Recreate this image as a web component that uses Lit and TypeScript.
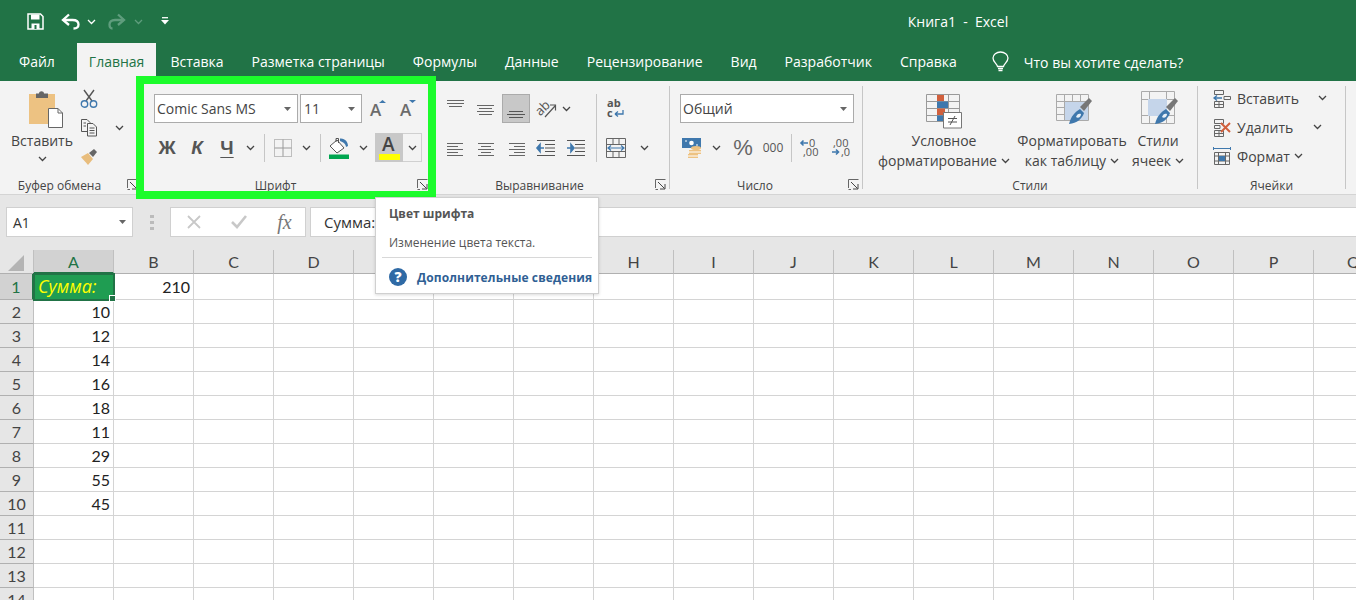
import { LitElement, html, css, svg } from 'lit';
import { customElement } from 'lit/decorators.js';

const BLUE = '#3f78ad';

const icon = (w: number, h: number, body: unknown) => html`<svg width=${w} height=${h} viewBox="0 0 ${w} ${h}" fill="none">${body}</svg>`;

const chev = (c = '#444') => icon(9, 6, svg`<path d="M1 1L4.5 4.5L8 1" stroke=${c} stroke-width="1.3"/>`);
const drop = () => icon(7, 4, svg`<path d="M0 0H7L3.5 4Z" fill="#666"/>`);
const launcher = () => html`<span class="launcher">${icon(11, 11, svg`<path d="M.5 9V.5H10.5" stroke="#666"/><path d="M3 3L9.5 9.5M5 10H10V5" stroke="#444"/><path d="M.5 10.5H3" stroke="#666"/>`)}</span>`;

const lines = (rows: [number, number, number][], color = '#666') => icon(24, 24, rows.map(([x1, x2, y]) => svg`<path d="M${x1} ${y}.5H${x2}" stroke=${color}/>`));

const alignIcons = {
  top: lines([[3, 20, 3], [3, 20, 6], [5, 18, 9]]),
  middle: lines([[3, 20, 8], [5, 18, 11], [3, 20, 14], [5, 18, 17]]),
  bottom: lines([[5, 19, 14], [3, 21, 17], [5, 19, 20]], '#555'),
  left: lines([[3, 19, 7], [3, 14, 10], [3, 19, 13], [3, 14, 16], [3, 19, 19]]),
  center: lines([[4, 20, 7], [7, 17, 10], [4, 20, 13], [7, 17, 16], [4, 20, 19]]),
  right: lines([[5, 21, 7], [10, 21, 10], [5, 21, 13], [10, 21, 16], [5, 21, 19]]),
};

// both indent icons keep the text lines on the right, only the arrow turns
const indent = (forward: boolean) => icon(20, 18, svg`
  <path d="M1 1.5H19M9 5.5H19M9 9H19M9 12.5H19M1 16.5H19" stroke="#555"/>
  <path d=${forward ? 'M1 9H6M5 5.5L8 9L5 12.5Z' : 'M8 9H3M4 5.5L1 9L4 12.5Z'} stroke=${BLUE} fill=${BLUE} stroke-width="1.6"/>`);

const slimBrush = svg`
  <path d="M24 14L33 5L36 8L28 18Z" fill="#777"/>
  <path d="M13 31C15 23 19 19 24 16L28 20C26 26 21 30 13 31Z" fill="#3f78ad"/>
  <path d="M20 24C21 21 23 20 25 21C25 24 22 26 20 24Z" fill="#e8f0f8"/>`;

const icons = {
  save: icon(17, 17, svg`<path d="M1 1H13.5L16 3.5V16H1Z" stroke="#fff" stroke-width="1.5"/><path d="M4 1.5H12.5V6.5H4Z" fill="#fff"/><path d="M4.5 16V10.5H12.5V16" fill="#fff"/><path d="M7.5 12H9.5V16H7.5Z" fill="#217346"/>`),
  undo: icon(19, 17, svg`<path d="M8 1.5L2 7L8 12" stroke="#fff" stroke-width="2.3"/><path d="M2.5 7H11.5C15.5 7 17.5 9 17.5 11.5C17.5 14 15.5 15.5 12.5 15.5" stroke="#fff" stroke-width="2.3"/>`),
  redo: icon(18, 17, svg`<path d="M10 1.5L16 7L10 12" stroke="#5f9d7d" stroke-width="2.3"/><path d="M15.5 7H7C3 7 1.5 9 1.5 11.5C1.5 14 2.5 15.5 4.5 15.5" stroke="#5f9d7d" stroke-width="2.3"/>`),
  custom: icon(8, 9, svg`<path d="M1 .7H7" stroke="#fff" stroke-width="1.3"/><path d="M0 3H8L4 7.5Z" fill="#fff"/>`),
  bulb: icon(17, 22, svg`<path d="M5.5 15.5C5 12.5 1 11 1 7C1 3.5 4.5 1 8.5 1C12.5 1 16 3.5 16 7C16 11 12 12.5 11.5 15.5Z" stroke="#fff" stroke-width="1.3"/><path d="M6 17.5H11M6.5 19.5H10.5" stroke="#fff" stroke-width="1.3"/>`),
  paste: icon(36, 38, svg`
    <path d="M1 4H27V34H1Z" fill="#edc282"/>
    <path d="M8 3.5H11C11 .5 16 .5 16 3.5H20V8H8Z" fill="#666"/>
    <path d="M20.5 18.5H30L34.5 23V37.5H20.5Z" fill="#fff" stroke="#666"/>
    <path d="M30 18.5V23H34.5" stroke="#666"/>`),
  cut: icon(18, 20, svg`<path d="M4 1L12 12M14 1L6 12" stroke="#555" stroke-width="1.4"/><circle cx="4.5" cy="15" r="3.2" stroke=${BLUE} stroke-width="1.4"/><circle cx="13.5" cy="15" r="3.2" stroke=${BLUE} stroke-width="1.4"/>`),
  copy: icon(18, 19, svg`
    <path d="M1.5 1.5H7L10 4.5V13.5H1.5Z" stroke="#555"/>
    <path d="M7.5 5.5H13L16.5 9V18H7.5Z" fill="#f3f3f3" stroke="#555"/>
    <path d="M3.5 5H6M3.5 8H6M9.5 10H14.5M9.5 12.5H14.5M9.5 15H14.5" stroke="#555"/>`),
  brush: icon(18, 18, svg`<path d="M1 9L8 5L13 11L8 17C6 14 3 12 1 9Z" fill="#e8bd7d"/><path d="M9 5L14 1L17 4L13 9Z" fill="#666"/>`),
  grow: icon(20, 22, svg`<text x="1" y="18" class="mid-a">A</text><path d="M10 5L13.5 2L17 5Z" fill=${BLUE}/>`),
  shrink: icon(20, 22, svg`<text x="1" y="18" class="mid-a">A</text><path d="M10 2H17L13.5 5Z" fill=${BLUE}/>`),
  borders: icon(18, 18, svg`<path d="M.5 .5H17.5V17.5H.5Z" stroke="#888" stroke-dasharray="1 1"/><path d="M9 .5V17.5M.5 9H17.5" stroke="#999"/>`),
  fill: icon(22, 22, svg`
    <path d="M2 9L9 3L16 11L9 16Z" fill="#fff" stroke="#555"/>
    <path d="M8 5V1.5H10.5V6" stroke="#555"/>
    <path d="M12 1.5C17 1 20 5 20 9L18 10C18 7 15 5 12 4Z" fill=${BLUE}/>
    <path d="M1 17.5H21V22H1Z" fill="#00a650"/>`),
  colour: icon(21, 24, svg`<text x="3" y="15" class="big-a">A</text><path d="M0 18H21V24H0Z" fill="#ffff00"/>`),
  orient: icon(24, 24, svg`
    <g transform="rotate(-45 9 11)"><text x="1" y="15" class="small-t">ab</text></g>
    <path d="M11 20L21 9M16 8H21.5V13.5" stroke="#555" stroke-width="1.2"/>`),
  wrap: icon(20, 22, svg`<text x="1" y="9" class="tiny bold">ab</text><text x="1" y="19" class="tiny bold">c</text><path d="M9 16H17V12M9 16L12 13.5M9 16L12 18.5" stroke=${BLUE} stroke-width="1.3"/>`),
  merge: icon(20, 20, svg`<path d="M.5 .5H19.5V19.5H.5ZM.5 6.5H19.5M.5 13.5H19.5M7 .5V6.5M13 .5V6.5M7 13.5V19.5M13 13.5V19.5" stroke="#666"/><path d="M2 10H18M5 7.5L2 10L5 12.5M15 7.5L18 10L15 12.5" stroke=${BLUE} stroke-width="1.2" fill="#f3f3f3"/>`),
  money: icon(20, 20, svg`
    <path d="M0 0H19V10H0Z" fill=${BLUE}/>
    <circle cx="9.5" cy="5" r="2.3" fill="#fff"/><path d="M3 3H5M14 7H16" stroke="#fff"/>
    <ellipse cx="14" cy="10" rx="5" ry="2" fill="#edc282"/><path d="M7 12H19V16H7Z" fill="#edc282"/><path d="M7 14H19" stroke="#fff"/>
    <path d="M6 16H16V20H6Z" fill="#edc282"/><path d="M6 18H16" stroke="#fff"/>`),
  decPlus: icon(20, 18, svg`<text x="9" y="8" class="tiny">0</text><text x="3" y="17" class="tiny">,00</text><path d="M8 4H1.5M3.5 1.5L1 4L3.5 6.5" stroke=${BLUE} stroke-width="1.6"/>`),
  decMinus: icon(20, 18, svg`<text x="3" y="8" class="tiny">,00</text><text x="11" y="17" class="tiny">,0</text><path d="M2 13H8M6 10.5L8.5 13L6 15.5" stroke=${BLUE} stroke-width="1.6"/>`),
  cond: icon(38, 38, svg`<g transform="translate(0 3)">
    <path d="M1.5 1.5H34.5V28.5H1.5ZM1.5 8.5H34.5M1.5 15.5H34.5M1.5 22.5H34.5M12.5 1.5V28.5M23.5 1.5V28.5" stroke="#999"/>
    <path d="M12 2H19V8H12Z" fill="#d1603d"/><path d="M12 8.5H23V15H12Z" fill=${BLUE}/><path d="M12 15.5H20V22H12Z" fill="#d1603d"/><path d="M12 22.5H18V28H12Z" fill=${BLUE}/>
    <path d="M18.5 19.5H36.5V35H18.5Z" fill="#fff" stroke="#777"/>
    <path d="M23 25.5H32M23 29H32M30 23L25 32" stroke="#555"/></g>`),
  table: icon(38, 38, svg`<g transform="translate(3 3)">
    <path d="M.5 1.5H32.5V27.5H.5ZM.5 8.5H32.5M.5 14.5H32.5M.5 21.5H32.5M8.5 1.5V27.5M16.5 1.5V27.5M24.5 1.5V27.5" stroke="#aaa"/>
    <path d="M9 9H32V27H9Z" fill="#c5d5ea"/>${slimBrush}</g>`),
  cell: icon(38, 38, svg`<g transform="translate(2 0)">
    <path d="M.5 1.5H33.5V33.5H.5ZM.5 9.5H33.5M.5 25.5H33.5M8.5 1.5V33.5M25.5 1.5V33.5" stroke="#aaa"/>
    <path d="M7 9H26V26H7Z" fill="#c5d5ea"/><g transform="translate(1 3)">${slimBrush}</g></g>`),
  insert: icon(18, 19, svg`<path d="M1.5 1.5H10.5V5.5H1.5ZM1.5 12.5H10.5V18.5H1.5ZM6 12.5V18.5M1.5 15.5H10.5M11 7.5H17.5V10.5H11Z" stroke="#666"/><path d="M1 9H9M4 6.5L1 9L4 11.5" stroke=${BLUE} stroke-width="1.3"/>`),
  remove: icon(18, 19, svg`<path d="M1.5 1.5H10.5V5.5H1.5ZM1.5 12.5H10.5V18.5H1.5ZM6 12.5V18.5M1.5 15.5H10.5M1.5 7.5H7V10.5H1.5Z" stroke="#666"/><path d="M8 5L17 14M17 5L8 14" stroke="#d1603d" stroke-width="2"/>`),
  format: icon(18, 20, svg`<path d="M.5 1V4M17.5 1V4M1 2.5H17" stroke=${BLUE}/><path d="M1.5 6.5H16.5V18.5H1.5ZM1.5 10H16.5M1.5 15H16.5M5.5 6.5V18.5M12.5 6.5V18.5" stroke="#666"/><path d="M6 10H12V15H6Z" fill=${BLUE}/>`),
  cancel: icon(14, 14, svg`<path d="M1 1L13 13M13 1L1 13" stroke="#c8c8c8" stroke-width="1.8"/>`),
  check: icon(16, 14, svg`<path d="M1 7L6 12L15 1" stroke="#c8c8c8" stroke-width="2.6"/>`),
  help: icon(18, 18, svg`<circle cx="9" cy="9" r="9" fill="#2f6aa5"/><text x="9" y="14" text-anchor="middle" class="qmark">?</text>`),
};

const TABS = ['Вставка', 'Разметка страницы', 'Формулы', 'Данные', 'Рецензирование', 'Вид', 'Разработчик', 'Справка'];
const COLS = 'ABCDEFGHIJKLMNOPQ'.split('');
const VALUES: Record<number, string> = { 2: '10', 3: '12', 4: '14', 5: '16', 6: '18', 7: '11', 8: '29', 9: '55', 10: '45' };

@customElement('app-root')
export class AppRoot extends LitElement {
  static styles = css`
    :host {
      display: block;
      position: relative;
      height: 600px;
      overflow: hidden;
      background: #fff;
      font-family: "Open Sans", "Noto Sans", sans-serif;
      font-size: 14px;
      color: #444;
    }
    svg { display: block; flex: none; overflow: visible; }
    svg text { font-family: "Open Sans", sans-serif; fill: #555; }
    .big-a { font-size: 19px; font-weight: 600; fill: #444; }
    .mid-a { font-size: 17px; font-weight: 600; fill: #6b6b6b; }
    .tiny { font-size: 11px; }
    .small-t { font-size: 13px; }
    .bold { font-weight: 700; }
    .qmark { font-size: 14px; font-weight: 800; fill: #fff; }

    .titlebar {
      height: 43px;
      background: #217346;
      color: #fff;
      display: grid;
      grid-template-columns: 1fr auto 1fr;
      align-items: center;
    }
    .qat { display: flex; align-items: center; padding-left: 27px; }
    .qat .undo { margin-left: 17px; }
    .qat .undo-more { margin-left: 7px; }
    .qat .redo { margin-left: 12px; }
    .qat .redo-more { margin-left: 8px; }
    .qat .custom { margin-left: 18px; }
    .title { white-space: pre; transform: translateX(280px); padding-bottom: 1px; }

    .tabs {
      height: 38px;
      background: #217346;
      color: #fff;
      display: flex;
      padding-left: 5px;
    }
    .tab {
      padding: 0 14px;
      line-height: 37px;
      white-space: nowrap;
    }
    .tab.active {
      background: #f3f3f3;
      color: #217346;
      padding: 0 12px;
      margin: 0 0 0 8px;
    }
    .search { display: flex; align-items: center; gap: 15px; margin-left: 21px; }

    .ribbon {
      height: 114px;
      box-sizing: border-box;
      background: #f3f3f3;
      border-bottom: 1px solid #d4d4d4;
      display: flex;
      padding: 5px 0 5px;
      color: #444;
    }
    .group {
      display: flex;
      flex-direction: column;
      border-right: 1px solid #c6c6c6;
      box-sizing: border-box;
      flex: none;
    }
    .body { flex: 1; min-height: 0; display: flex; padding-top: 8px; }
    .foot {
      height: 21px;
      flex: none;
      box-sizing: border-box;
      font-size: 12px;
      line-height: 19px;
      padding: 8px 22px 0 0;
      position: relative;
      text-align: center;
    }
    .foot.plain { padding-right: 0; }
    .launcher { position: absolute; right: 3px; top: 11px; }

    .clip { width: 142px; }
    .font { width: 290px; }
    .font .body { padding-left: 12px; flex-direction: column; }
    .align { width: 238px; }
    .align .body { padding-left: 9px; }
    .num { width: 193px; }
    .num .body { padding-left: 10px; flex-direction: column; }
    .styles { width: 335px; }
    .styles .body { padding: 0 0 0 11px; }
    .cells { width: 148px; }
    .cells .body { padding: 0 0 0 15px; flex-direction: column; gap: 3px; margin-top: -1px; }

    .paste {
      width: 84px;
      display: flex;
      flex-direction: column;
      align-items: center;
      margin-top: -4px;
    }
    .paste > svg { margin-left: 8px; }
    .paste .label { margin-top: 3px; line-height: 20px; }
    .paste .under { margin-top: 5px; }
    .clip-tools { display: flex; flex-direction: column; margin-top: -10px; }
    .clip-row { height: 29px; display: flex; align-items: center; flex: none; }
    .clip-row svg:first-child { margin-left: -4px; }
    .clip-row svg + svg { margin-left: 17px; }

    .row { height: 29px; display: flex; align-items: center; flex: none; }
    .row + .row { margin-top: 10px; }
    .row.pull { margin-left: -2px; }
    .tool { width: 30px; height: 29px; display: flex; align-items: center; justify-content: center; flex: none; }
    .tool.small { width: 16px; }
    .tool.small.back { margin-left: -3px; }
    .tool.small.merge-more { margin-left: 5px; }
    .tool.mid { width: 24px; }
    .tool.on { background: #c8c8c8; border: 1px solid #ababab; box-sizing: border-box; width: 28px; margin: 0 1px; }
    .letter { font: bold 19px "Liberation Sans", sans-serif; color: #555; }
    .letter.i { font-style: italic; }
    .letter.u { text-decoration: underline; text-underline-offset: 3px; }
    .sep { width: 1px; height: 28px; background: #c6c6c6; margin: 0 6px; flex: none; }
    .sep.near-right { margin-right: 3px; }
    .sep.near { margin: 0 3px; }

    .select {
      height: 29px;
      box-sizing: border-box;
      background: #fff;
      border: 1px solid #ababab;
      display: flex;
      align-items: center;
      justify-content: space-between;
      padding: 0 6px 0 2px;
      flex: none;
    }
    .select.face { width: 144px; margin-right: 2px; }
    .select.size { width: 62px; margin-right: 2px; padding-left: 3px; }
    .select.fmt { width: 174px; }
    .split { display: flex; height: 29px; }
    .split .a { width: 28px; background: #c8c8c8; display: flex; align-items: center; justify-content: center; }
    .split .b { width: 19px; box-sizing: border-box; border: 1px solid #d0d0d0; border-left: 0; display: flex; align-items: center; justify-content: center; }

    .al-col { display: flex; flex-direction: column; }
    .al-sep { width: 1px; height: 68px; background: #c6c6c6; margin: 0 4px 0 5px; }
    .percent { font-size: 22px; color: #666; font-family: "Liberation Sans", sans-serif; }
    .thousands { font-size: 12px; color: #555; }

    .big {
      display: flex;
      flex-direction: column;
      align-items: center;
      flex: none;
      line-height: 20px;
      text-align: center;
      white-space: nowrap;
    }
    .big > svg { margin: 4px 0 3px; }
    .big.c1 { width: 140px; }
    .big.c2 { width: 116px; }
    .big.c3 { width: 56px; }
    .with-chev { display: flex; align-items: center; gap: 4px; justify-content: center; }
    .cell-row { height: 26px; display: flex; align-items: center; gap: 6px; flex: none; }
    .cell-row .chev-a { margin-left: 13px; }
    .cell-row .chev-b { margin-left: 14px; }
    .cell-row .chev-c { margin-left: -2px; }

    .fbar {
      height: 55px;
      box-sizing: border-box;
      background: #e6e6e6;
      display: flex;
      padding: 12px 0 13px 6px;
    }
    .namebox {
      width: 127px;
      box-sizing: border-box;
      background: #fff;
      border: 1px solid #d0d0d0;
      display: flex;
      align-items: center;
      justify-content: space-between;
      padding: 0 6px;
      color: #333;
    }
    .grip { width: 37px; display: flex; flex-direction: column; align-items: center; justify-content: center; gap: 3px; }
    .grip i { width: 4px; height: 3px; background: #bbb; display: block; }
    .fbuttons {
      width: 136px;
      box-sizing: border-box;
      background: #fff;
      border: 1px solid #d0d0d0;
      display: grid;
      grid-template-columns: 45px 46px 45px;
      align-items: center;
      justify-items: center;
    }
    .fx { font: italic 20px "Liberation Serif", serif; color: #777; }
    .formula {
      flex: 1;
      margin-left: 4px;
      background: #fff;
      border: 1px solid #d0d0d0;
      border-right: 0;
      padding-left: 13px;
      line-height: 28px;
      font-size: 15px;
      color: #333;
    }

    .sheet {
      display: grid;
      grid-template-columns: 34px repeat(17, 80px);
      grid-template-rows: 24px 26px repeat(13, 24px);
      font-family: Lato, "Open Sans", sans-serif;
      font-size: 16px;
      color: #222;
    }
    .hd {
      background: #e6e6e6;
      border-right: 1px solid #c0c0c0;
      border-bottom: 1px solid #b0b0b0;
      box-sizing: border-box;
      display: flex;
      align-items: center;
      justify-content: center;
      color: #444;
    }
    .hd.corner svg { margin: 2px 0 0 -1px; }
    .hd.on { background: #d2d2d2; color: #217346; border-bottom: 2px solid #217346; }
    .hd.rowh.on { border-bottom: 1px solid #b0b0b0; border-right: 2px solid #217346; }
    .c {
      box-sizing: border-box;
      border-right: 1px solid #d4d4d4;
      border-bottom: 1px solid #d4d4d4;
      text-align: right;
      padding: 1px 3px 0 0;
      line-height: 22px;
    }
    .c.first { line-height: 23px; }
    .c.sel {
      position: relative;
      background: #1f9d52;
      color: #ffff00;
      outline: 2px solid #217346;
      outline-offset: -1px;
      text-align: left;
      padding-left: 4px;
      font: italic 18px "Open Sans", sans-serif;
      line-height: 23px;
    }
    .handle {
      position: absolute;
      right: -3px;
      bottom: -3px;
      width: 5px;
      height: 5px;
      background: #217346;
      border: 1px solid #fff;
    }

    .highlight {
      position: absolute;
      left: 136px;
      top: 76px;
      width: 300px;
      height: 123px;
      box-sizing: border-box;
      border: 8px solid #1cfc2c;
      pointer-events: none;
    }
    .tip {
      position: absolute;
      left: 375px;
      top: 197px;
      width: 224px;
      height: 97px;
      box-sizing: border-box;
      background: #fff;
      border: 1px solid #d0d0d0;
      box-shadow: 0 1px 3px rgba(0, 0, 0, .15);
      padding: 7px 6px 0 13px;
      font-size: 12px;
      color: #555;
    }
    .tip b { display: block; line-height: 17px; font-weight: 700; }
    .tip p { margin: 12px 0 0; line-height: 17px; }
    .tip hr { border: 0; border-top: 1px solid #d8d8d8; margin: 6px 0 0 -7px; }
    .tip .more {
      display: flex;
      align-items: center;
      gap: 10px;
      margin: 10px 0 0 0;
      color: #2f5f94;
      font-weight: 700;
      letter-spacing: .1px;
      white-space: nowrap;
    }
  `;

  private renderHeader() {
    return html`
      <div class="titlebar">
        <div class="qat">
          ${icons.save}
          <span class="undo">${icons.undo}</span>
          <span class="undo-more">${chev('#fff')}</span>
          <span class="redo">${icons.redo}</span>
          <span class="redo-more">${chev('#5f9d7d')}</span>
          <span class="custom">${icons.custom}</span>
        </div>
        <div class="title">Книга1  -  Excel</div>
        <div></div>
      </div>
      <div class="tabs">
        <div class="tab">Файл</div>
        <div class="tab active">Главная</div>
        ${TABS.map(t => html`<div class="tab">${t}</div>`)}
        <div class="search">${icons.bulb}<span>Что вы хотите сделать?</span></div>
      </div>
    `;
  }

  private renderClipboard() {
    return html`
      <div class="group clip">
        <div class="body">
          <div class="paste">
            ${icons.paste}
            <span class="label">Вставить</span>
            <span class="under">${chev()}</span>
          </div>
          <div class="clip-tools">
            <div class="clip-row">${icons.cut}</div>
            <div class="clip-row">${icons.copy}${chev()}</div>
            <div class="clip-row">${icons.brush}</div>
          </div>
        </div>
        <div class="foot">Буфер обмена${launcher()}</div>
      </div>
    `;
  }

  private renderFont() {
    return html`
      <div class="group font">
        <div class="body">
          <div class="row">
            <div class="select face"><span>Comic Sans MS</span>${drop()}</div>
            <div class="select size"><span>11</span>${drop()}</div>
            <div class="tool">${icons.grow}</div>
            <div class="tool">${icons.shrink}</div>
          </div>
          <div class="row pull">
            <div class="tool"><span class="letter">Ж</span></div>
            <div class="tool"><span class="letter i">К</span></div>
            <div class="tool"><span class="letter u">Ч</span></div>
            <div class="tool small">${chev()}</div>
            <div class="sep near-right"></div>
            <div class="tool">${icons.borders}</div>
            <div class="tool small">${chev()}</div>
            <div class="sep"></div>
            <div class="tool mid">${icons.fill}</div>
            <div class="tool mid">${chev()}</div>
            <div class="split">
              <div class="a">${icons.colour}</div>
              <div class="b">${chev()}</div>
            </div>
          </div>
        </div>
        <div class="foot">Шрифт${launcher()}</div>
      </div>
    `;
  }

  private renderAlign() {
    return html`
      <div class="group align">
        <div class="body">
          <div class="al-col">
            <div class="row">
              <div class="tool">${alignIcons.top}</div>
              <div class="tool">${alignIcons.middle}</div>
              <div class="tool on">${alignIcons.bottom}</div>
              <div class="tool">${icons.orient}</div>
              <div class="tool small back">${chev()}</div>
            </div>
            <div class="row">
              <div class="tool">${alignIcons.left}</div>
              <div class="tool">${alignIcons.center}</div>
              <div class="tool">${alignIcons.right}</div>
              <div class="tool">${indent(false)}</div>
              <div class="tool">${indent(true)}</div>
            </div>
          </div>
          <div class="al-sep"></div>
          <div class="al-col">
            <div class="row"><div class="tool">${icons.wrap}</div></div>
            <div class="row">
              <div class="tool">${icons.merge}</div>
              <div class="tool small merge-more">${chev()}</div>
            </div>
          </div>
        </div>
        <div class="foot">Выравнивание${launcher()}</div>
      </div>
    `;
  }

  private renderNumber() {
    return html`
      <div class="group num">
        <div class="body">
          <div class="row"><div class="select fmt"><span>Общий</span>${drop()}</div></div>
          <div class="row">
            <div class="tool mid">${icons.money}</div>
            <div class="tool mid">${chev()}</div>
            <div class="tool"><span class="percent">%</span></div>
            <div class="tool"><span class="thousands">000</span></div>
            <div class="sep near"></div>
            <div class="tool">${icons.decPlus}</div>
            <div class="tool">${icons.decMinus}</div>
          </div>
        </div>
        <div class="foot">Число${launcher()}</div>
      </div>
    `;
  }

  private renderStyles() {
    return html`
      <div class="group styles">
        <div class="body">
          <div class="big c1">
            ${icons.cond}
            <span>Условное</span>
            <span class="with-chev">форматирование ${chev()}</span>
          </div>
          <div class="big c2">
            ${icons.table}
            <span>Форматировать</span>
            <span class="with-chev">как таблицу ${chev()}</span>
          </div>
          <div class="big c3">
            ${icons.cell}
            <span>Стили</span>
            <span class="with-chev">ячеек ${chev()}</span>
          </div>
        </div>
        <div class="foot plain">Стили</div>
      </div>
    `;
  }

  private renderCells() {
    return html`
      <div class="group cells">
        <div class="body">
          <div class="cell-row">${icons.insert}<span>Вставить</span><span class="chev-a">${chev()}</span></div>
          <div class="cell-row">${icons.remove}<span>Удалить</span><span class="chev-b">${chev()}</span></div>
          <div class="cell-row">${icons.format}<span>Формат</span><span class="chev-c">${chev()}</span></div>
        </div>
        <div class="foot plain">Ячейки</div>
      </div>
    `;
  }

  private renderFormulaBar() {
    return html`
      <div class="fbar">
        <div class="namebox"><span>A1</span>${drop()}</div>
        <div class="grip"><i></i><i></i><i></i></div>
        <div class="fbuttons">${icons.cancel}${icons.check}<span class="fx">fx</span></div>
        <div class="formula">Сумма:</div>
      </div>
    `;
  }

  private renderSheet() {
    const rows = Array.from({ length: 14 }, (_, i) => i + 1);
    return html`
      <div class="sheet">
        <div class="hd corner">${icon(16, 16, svg`<path d="M16 0V16H0Z" fill="#b4b4b4"/>`)}</div>
        ${COLS.map(c => html`<div class="hd ${c === 'A' ? 'on' : ''}">${c}</div>`)}
        ${rows.map(r => html`
          <div class="hd rowh ${r === 1 ? 'on' : ''}">${r}</div>
          ${COLS.map(c => this.renderCell(r, c))}
        `)}
      </div>
    `;
  }

  private renderCell(r: number, c: string) {
    if (r === 1 && c === 'A') return html`<div class="c sel">Сумма:<span class="handle"></span></div>`;
    if (r === 1 && c === 'B') return html`<div class="c first">210</div>`;
    return html`<div class="c">${c === 'A' ? VALUES[r] ?? '' : ''}</div>`;
  }

  render() {
    return html`
      ${this.renderHeader()}
      <div class="ribbon">
        ${this.renderClipboard()}
        ${this.renderFont()}
        ${this.renderAlign()}
        ${this.renderNumber()}
        ${this.renderStyles()}
        ${this.renderCells()}
      </div>
      ${this.renderFormulaBar()}
      ${this.renderSheet()}
      <div class="highlight"></div>
      <div class="tip">
        <b>Цвет шрифта</b>
        <p>Изменение цвета текста.</p>
        <hr />
        <div class="more">${icons.help}<span>Дополнительные сведения</span></div>
      </div>
    `;
  }
}
